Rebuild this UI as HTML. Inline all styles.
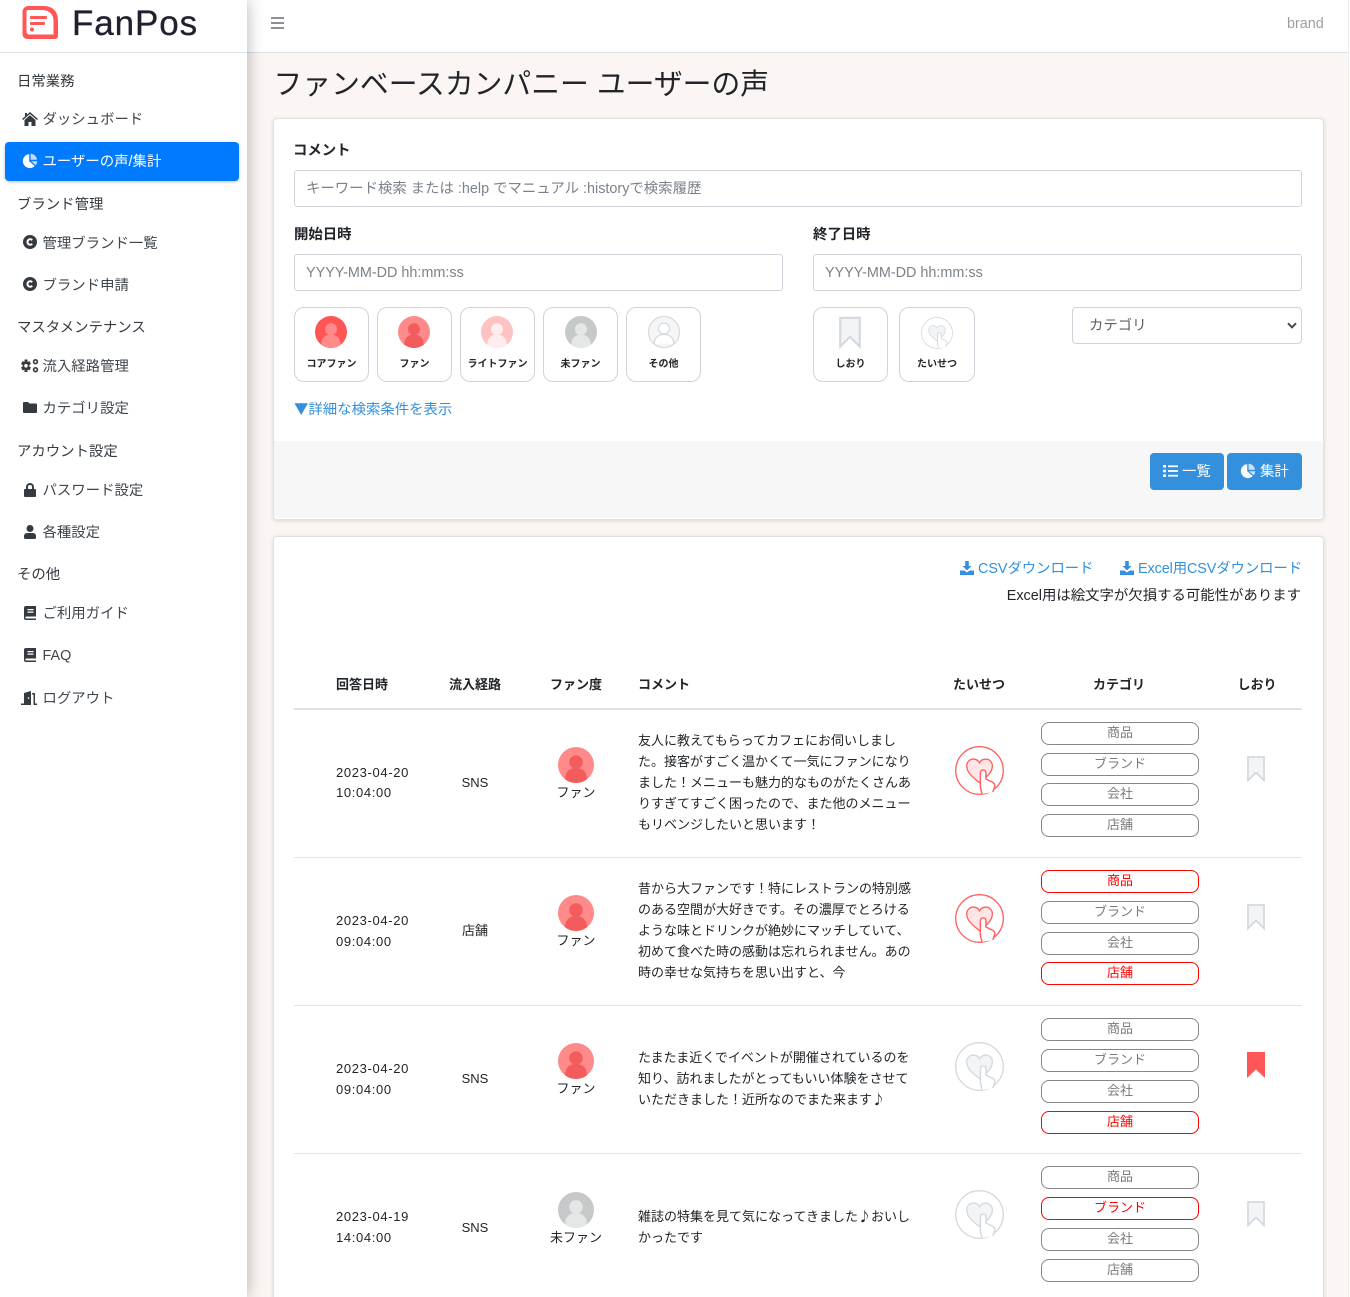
<!DOCTYPE html>
<html lang="ja"><head><meta charset="utf-8"><title>FanPos</title>
<style>
*{box-sizing:border-box}
html,body{margin:0;padding:0;background:#fff}
#p{position:relative;width:1350px;height:1297px;overflow:hidden;background:#fbf6f3;font-family:"Liberation Sans","Noto Sans CJK JP",sans-serif;color:#212529;font-size:13px}
.a,.t,.c{position:absolute}
.t{line-height:20px;height:20px;white-space:nowrap;margin-top:1px}
.c{line-height:20px;height:20px;white-space:nowrap;text-align:center;margin-top:1px}
svg{position:absolute;display:block;overflow:visible}
.s{font-size:14.4px;color:#343a40;left:17px;width:220px}
.n{font-size:14.4px;color:#3f464d;left:42.5px;width:190px}
.ic{color:#343a40;fill:currentColor}
.b{font-weight:700}
.d{letter-spacing:.65px}
.j{font-family:"Noto Sans CJK JP",sans-serif;margin-top:0}
.card{background:#fff;border:1px solid #e3e1e0;border-radius:4px;box-shadow:0 1px 4px rgba(0,0,0,.14)}
.inp{background:#fff;border:1px solid #ced4da;border-radius:3px;font-size:14.4px;color:#7b8289;line-height:37px;padding-left:11px;white-space:nowrap}
.tile{background:#fff;border:1px solid #ced4da;border-radius:10px;top:307px;height:75px}
.lb{font-size:10px;font-weight:700;top:354px;color:#212529}
.btn{background:#3490dc;border-radius:4px;top:453px;height:37px}
.l{color:#3490dc}
.cat{left:1041px;width:158px;height:23px;border:1px solid #868686;border-radius:8px;text-align:center;font-size:13px;line-height:19px;color:#7b7b7b;background:#fff}
.on{border-color:#f00;color:#f00}
.cm{left:638px;width:290px}
.rl{left:294px;width:1008px;height:1px;background:#e2e4e6}
</style></head><body><div id="p">
<svg width="0" height="0" style="position:absolute">
<defs>
<symbol id="av" viewBox="0 0 32 32"><circle cx="16" cy="16" r="16" style="fill:var(--x)"/><circle cx="16" cy="13.3" r="6" style="fill:var(--y)"/><path d="M6.4 28.8V27.5C6.4 22 10.7 18.5 16 18.5s9.600 3.500 9.600 9v1.300A16 16 0 0 1 6.400 28.800z" style="fill:var(--y)"/></symbol>
<symbol id="av0" viewBox="0 0 32 32"><circle cx="16" cy="16" r="15.500" fill="#f5f6f7" stroke="#ced4da"/><circle cx="16" cy="12.500" r="5.500" fill="#fff" stroke="#ced4da"/><path d="M6.500 28V26.500C6.500 21.500 10.700 18.500 16 18.500s9.500 3 9.500 8V28" fill="#fff" stroke="#ced4da"/></symbol>
<symbol id="hh" viewBox="0 0 48 48"><circle cx="24" cy="24" r="23.300" fill="#fff" style="stroke:var(--x)" stroke-width="1.300"/><path d="M24 36C18 31 11.500 26.500 11.500 19.500C11.500 15.500 14.500 12.800 18 12.800C20.500 12.800 22.800 14.200 24 16.500C25.200 14.200 27.500 12.800 30 12.800C33.500 12.800 36.600 15.500 36.600 19.500C36.600 26.500 30 31 24 36Z" style="fill:var(--y);stroke:var(--x)" stroke-width="1.300"/><path d="M26.500 47C26 44 24.600 41.500 24.900 39V26C24.900 22.600 30.300 22.600 30.300 26V32.300L37.300 35.800C38.800 36.800 39.300 38 39 39.500L37 45" fill="#fff" style="stroke:var(--x)" stroke-width="1.400"/></symbol>
<symbol id="bm" viewBox="0 0 18 26"><path d="M1 1H17V24.500L9 16.500L1 24.500Z" fill="#f3f4f5" stroke="#d3d9df" stroke-width="1.700"/></symbol>
<symbol id="pie" viewBox="0 0 16 16"><path d="M7.200 1.100A7 7 0 1 0 12.800 13L7.200 8.200Z" fill="currentColor"/><path d="M8.600 .8V6.800H15A6.700 6.700 0 0 0 8.600 .8Z" fill="currentColor" opacity=".75"/><path d="M9 8.300H15.300A7 7 0 0 1 13.800 12.300Z" fill="currentColor" opacity=".75"/></symbol>
<symbol id="cc" viewBox="0 0 14 14"><path fill-rule="evenodd" d="M7 0a7 7 0 1 1 0 14A7 7 0 0 1 7 0zM7.200 3.300a3.700 3.700 0 1 0 2.700 6.200L8.500 8.100a1.700 1.700 0 1 1 0-2.200L9.900 4.500a3.700 3.700 0 0 0-2.700-1.200z" fill="currentColor"/></symbol>
<symbol id="book" viewBox="0 0 12 14"><path fill-rule="evenodd" d="M2 0H12V10.500H2.300a1 1 0 0 0 0 2H12V14H2a2 2 0 0 1-2-2V2A2 2 0 0 1 2 0zM3.500 3V4.200H9.500V3zM3.500 5.500V6.700H9.500V5.500z" fill="currentColor"/></symbol>
<symbol id="dl" viewBox="0 0 14 14"><path d="M5.200 0H8.800V5H11.500L7 9.500 2.500 5H5.200ZM0 9.500H4.300L7 11.500 9.700 9.500H14V14H0Z" fill="currentColor"/></symbol>
</defs></svg>

<!-- topbar -->
<div class="a" style="left:0;top:0;width:1350px;height:53px;background:#fff;border-bottom:1px solid #dfe2e8"></div>
<div class="a" style="left:271px;top:17px;width:13px;height:2px;background:#8d9094"></div>
<div class="a" style="left:271px;top:22px;width:13px;height:2px;background:#8d9094"></div>
<div class="a" style="left:271px;top:27px;width:13px;height:2px;background:#8d9094"></div>
<div class="t" style="left:1287px;top:13px;font-size:14.400px;color:#9a9fa4">brand</div>
<div class="a" style="left:1348px;top:0;width:2px;height:1297px;background:#fff;border-left:1px solid #eeeceb"></div>

<!-- sidebar -->
<div class="a" style="left:0;top:0;width:247px;height:1297px;background:#fff;box-shadow:0 0 16px rgba(0,0,0,.3)"></div>
<div class="a" style="left:0;top:52px;width:247px;height:1px;background:#dfe2e8"></div>
<svg style="left:22px;top:6px" width="37" height="34" viewBox="0 0 37 34"><path fill-rule="evenodd" d="M6 0H22C31 0 36 6 36 14V30A3 3 0 0 1 33 33H5A5 5 0 0 1 .5 29V6A6 6 0 0 1 6 0Z" fill="#ff5757"/><path d="M5.500 4H20C27 4 31.500 8.500 31.500 14.500V28.500H7A2.500 2.500 0 0 1 4.500 26V5Z" fill="#fff"/><rect x="8" y="10" width="17" height="3" rx="1" fill="#ff5757"/><rect x="8" y="16" width="15" height="3" rx="1" fill="#ff5757"/><circle cx="10" cy="23.500" r="2" fill="#ff5757"/></svg>
<div class="t" style="left:72px;top:3px;height:40px;line-height:40px;font-size:35px;letter-spacing:.9px;color:#20202f;-webkit-text-stroke:.3px #20202f">FanPos</div>

<div class="t s" style="top:71px">日常業務</div>
<svg class="ic" style="left:22px;top:112px" width="16" height="14" viewBox="0 0 16 14"><path d="M8 0L16 7 15 8 8 2 1 8 0 7 3 4.500V1H5V2.800Z"/><path d="M8 3.300L13.500 8V14H9.500V10H6.500V14H2.500V8Z"/></svg>
<div class="t n" style="top:109px">ダッシュボード</div>
<div class="a" style="left:5px;top:142px;width:234px;height:39px;background:#007bff;border-radius:4px;box-shadow:0 1px 3px rgba(0,0,0,.25)"></div>
<svg style="left:22px;top:153px;color:#fff" width="16" height="16"><use href="#pie"/></svg>
<div class="t n" style="top:151px;color:#fff">ユーザーの声/集計</div>
<div class="t s" style="top:194px">ブランド管理</div>
<svg style="left:23px;top:235px;color:#343a40" width="14" height="14"><use href="#cc"/></svg>
<div class="t n" style="top:233px">管理ブランド一覧</div>
<svg style="left:23px;top:277px;color:#343a40" width="14" height="14"><use href="#cc"/></svg>
<div class="t n" style="top:275px">ブランド申請</div>
<div class="t s" style="top:317px">マスタメンテナンス</div>
<svg class="ic" style="left:21px;top:359px" width="18" height="14" viewBox="0 0 18 14"><path fill-rule="evenodd" d="M5 .5H8V3L9.800 2 11.500 5 9.800 6V7.500L11.500 8.500 9.800 11.500 8 10.500V13H5V10.500L3.200 11.500 1.500 8.500 3.200 7.500V6L1.500 5 3.200 2 5 3ZM6.500 5a1.800 1.800 0 1 0 0 3.600 1.800 1.800 0 0 0 0-3.600z" transform="translate(-1.500 0)"/><path fill-rule="evenodd" d="M14.500 0a2.700 2.700 0 1 1 0 5.400 2.700 2.700 0 0 1 0-5.400zM14.500 1.600a1.100 1.100 0 1 0 0 2.200 1.100 1.100 0 0 0 0-2.200zM14.500 8a2.700 2.700 0 1 1 0 5.400 2.700 2.700 0 0 1 0-5.400zM14.500 9.600a1.100 1.100 0 1 0 0 2.200 1.100 1.100 0 0 0 0-2.200z"/></svg>
<div class="t n" style="top:356px">流入経路管理</div>
<svg class="ic" style="left:23px;top:402px" width="14" height="11" viewBox="0 0 14 11"><path d="M1 0H5L6.500 1.500H13A1 1 0 0 1 14 2.500V10A1 1 0 0 1 13 11H1A1 1 0 0 1 0 10V1A1 1 0 0 1 1 0Z"/></svg>
<div class="t n" style="top:398px">カテゴリ設定</div>
<div class="t s" style="top:441px">アカウント設定</div>
<svg class="ic" style="left:24px;top:483px" width="12" height="14" viewBox="0 0 12 14"><path fill-rule="evenodd" d="M6 0A4 4 0 0 1 10 4V6H11A1 1 0 0 1 12 7V13A1 1 0 0 1 11 14H1A1 1 0 0 1 0 13V7A1 1 0 0 1 1 6H2V4A4 4 0 0 1 6 0ZM6 2A2 2 0 0 0 4 4V6H8V4A2 2 0 0 0 6 2Z"/></svg>
<div class="t n" style="top:480px">パスワード設定</div>
<svg class="ic" style="left:24px;top:525px" width="12" height="14" viewBox="0 0 12 14"><circle cx="6" cy="3.500" r="3.500"/><path d="M3 8H9A3 3 0 0 1 12 11V12.800A1.200 1.200 0 0 1 10.800 14H1.200A1.200 1.200 0 0 1 0 12.800V11A3 3 0 0 1 3 8Z"/></svg>
<div class="t n" style="top:522px">各種設定</div>
<div class="t s" style="top:564px">その他</div>
<svg style="left:24px;top:606px;color:#343a40" width="12" height="14"><use href="#book"/></svg>
<div class="t n" style="top:603px">ご利用ガイド</div>
<svg style="left:24px;top:648px;color:#343a40" width="12" height="14"><use href="#book"/></svg>
<div class="t n" style="top:645px">FAQ</div>
<svg class="ic" style="left:21px;top:691px" width="18" height="14" viewBox="0 0 18 14"><path fill-rule="evenodd" d="M3 12.500V2L10 0V14H0V12.500ZM7.500 6.300a.8.800 0 1 0 0 1.600.800.800 0 0 0 0-1.600z"/><path d="M11 2H14V12.500H16V14H12.500V3.500H11Z"/></svg>
<div class="t n" style="top:688px">ログアウト</div>

<!-- title -->
<div class="t" style="left:273.500px;top:63px;height:42px;line-height:42px;font-size:28.800px;color:#212529">ファンベースカンパニー ユーザーの声</div>

<!-- search card -->
<div class="a card" style="left:273px;top:118px;width:1051px;height:402px"></div>
<div class="t b" style="left:293px;top:140px;font-size:14.400px">コメント</div>
<div class="a inp" style="left:294px;top:170px;width:1008px;height:37px">キーワード検索 または :help でマニュアル :historyで検索履歴</div>
<div class="t b" style="left:294px;top:224px;font-size:14.400px">開始日時</div>
<div class="t b" style="left:813px;top:224px;font-size:14.400px">終了日時</div>
<div class="a inp" style="left:294px;top:254px;width:489px;height:37px">YYYY-MM-DD hh:mm:ss</div>
<div class="a inp" style="left:813px;top:254px;width:489px;height:37px">YYYY-MM-DD hh:mm:ss</div>

<div class="a tile" style="left:294px;width:75px"></div>
<div class="a tile" style="left:377px;width:75px"></div>
<div class="a tile" style="left:460px;width:75px"></div>
<div class="a tile" style="left:543px;width:75px"></div>
<div class="a tile" style="left:626px;width:75px"></div>
<svg style="left:315px;top:316px;--x:#ff5555;--y:#ff8a8a" width="32" height="32"><use href="#av"/></svg>
<svg style="left:398px;top:316px;--x:#ff8a8a;--y:#f25c5c" width="32" height="32"><use href="#av"/></svg>
<svg style="left:481px;top:316px;--x:#ffc2c2;--y:#ffecec" width="32" height="32"><use href="#av"/></svg>
<svg style="left:565px;top:316px;--x:#c6c9ca;--y:#e5e6e6" width="32" height="32"><use href="#av"/></svg>
<svg style="left:648px;top:316px" width="32" height="32"><use href="#av0"/></svg>
<div class="c lb" style="left:294px;width:75px">コアファン</div>
<div class="c lb" style="left:377px;width:75px">ファン</div>
<div class="c lb" style="left:460px;width:75px">ライトファン</div>
<div class="c lb" style="left:543px;width:75px">未ファン</div>
<div class="c lb" style="left:626px;width:75px">その他</div>

<div class="a tile" style="left:813px;width:75px"></div>
<div class="a tile" style="left:899px;width:76px"></div>
<svg style="left:839px;top:316px" width="22" height="33"><use href="#bm"/></svg>
<svg style="left:921px;top:317px;--x:#d6dbe0;--y:#f3f4f5" width="32" height="32"><use href="#hh"/></svg>
<div class="c lb" style="left:813px;width:75px">しおり</div>
<div class="c lb" style="left:899px;width:76px">たいせつ</div>

<div class="a inp" style="left:1072px;top:307px;width:230px;height:37px;padding-left:16px;color:#5a6268;font-size:14.400px;border-radius:4px">カテゴリ</div>
<svg style="left:1287px;top:322px" width="10" height="7" viewBox="0 0 10 7"><path d="M1 1.300L5 5.300 9 1.300" fill="none" stroke="#444a50" stroke-width="2"/></svg>

<div class="t l j" style="left:294px;top:399px;font-size:14.400px">▼詳細な検索条件を表示</div>

<div class="a" style="left:274px;top:441px;width:1049px;height:77px;background:#f7f7f7;border-radius:0 0 4px 4px"></div>
<div class="a btn" style="left:1150px;width:74px"></div>
<div class="a btn" style="left:1227px;width:75px"></div>
<svg style="left:1163px;top:465px" width="15" height="12" viewBox="0 0 15 12" fill="#fff"><rect width="3" height="2.600"/><rect y="4.700" width="3" height="2.600"/><rect y="9.400" width="3" height="2.600"/><rect x="5" y=".4" width="10" height="1.800"/><rect x="5" y="5.100" width="10" height="1.800"/><rect x="5" y="9.800" width="10" height="1.800"/></svg>
<div class="t" style="left:1182px;top:461px;font-size:14.400px;color:#fff">一覧</div>
<svg style="left:1240px;top:463px;color:#fff" width="16" height="16"><use href="#pie"/></svg>
<div class="t" style="left:1260px;top:461px;font-size:14.400px;color:#fff">集計</div>

<!-- list card -->
<div class="a card" style="left:273px;top:536px;width:1051px;height:790px"></div>
<svg style="left:960px;top:561px;color:#3490dc" width="14" height="14"><use href="#dl"/></svg>
<div class="t l" style="left:978px;top:558px;font-size:14.400px;letter-spacing:-.05px">CSVダウンロード</div>
<svg style="left:1120px;top:561px;color:#3490dc" width="14" height="14"><use href="#dl"/></svg>
<div class="t l" style="left:1138px;top:558px;font-size:14.400px;letter-spacing:-.1px">Excel用CSVダウンロード</div>
<div class="t" style="right:49px;top:585px;font-size:14.400px">Excel用は絵文字が欠損する可能性があります</div>

<div class="t b" style="left:336px;top:674px">回答日時</div>
<div class="c b" style="left:425px;width:100px;top:674px">流入経路</div>
<div class="c b" style="left:526px;width:100px;top:674px">ファン度</div>
<div class="t b" style="left:638px;top:674px">コメント</div>
<div class="c b" style="left:929px;width:100px;top:674px">たいせつ</div>
<div class="c b" style="left:1069px;width:100px;top:674px">カテゴリ</div>
<div class="c b" style="left:1207px;width:100px;top:674px">しおり</div>
<div class="a rl" style="top:708px;height:2px;background:#dee2e6"></div>

<!-- row 1 -->
<div class="t d" style="left:336px;top:762px">2023-04-20</div>
<div class="t d" style="left:336px;top:782px">10:04:00</div>
<div class="c" style="left:425px;width:100px;top:772px">SNS</div>
<svg style="left:558px;top:747px;--x:#ff8a8a;--y:#f25c5c" width="36" height="36"><use href="#av"/></svg>
<div class="c" style="left:526px;width:100px;top:782px">ファン</div>
<div class="t cm" style="top:730px">友人に教えてもらってカフェにお伺いしまし</div>
<div class="t cm" style="top:751px">た。接客がすごく温かくて一気にファンになり</div>
<div class="t cm" style="top:772px">ました！メニューも魅力的なものがたくさんあ</div>
<div class="t cm" style="top:793px">りすぎてすごく困ったので、また他のメニュー</div>
<div class="t cm" style="top:814px">もリベンジしたいと思います！</div>
<svg style="left:955px;top:746px;--x:#ff5f5f;--y:#ffe5e5" width="49" height="49"><use href="#hh"/></svg>
<div class="a cat" style="top:722px">商品</div>
<div class="a cat" style="top:753px">ブランド</div>
<div class="a cat" style="top:783px">会社</div>
<div class="a cat" style="top:814px">店舗</div>
<svg style="left:1247px;top:756px" width="18" height="26"><use href="#bm"/></svg>
<div class="a rl" style="top:857px"></div>

<!-- row 2 -->
<div class="t d" style="left:336px;top:910px">2023-04-20</div>
<div class="t d" style="left:336px;top:931px">09:04:00</div>
<div class="c" style="left:425px;width:100px;top:920px">店舗</div>
<svg style="left:558px;top:895px;--x:#ff8a8a;--y:#f25c5c" width="36" height="36"><use href="#av"/></svg>
<div class="c" style="left:526px;width:100px;top:930px">ファン</div>
<div class="t cm" style="top:878px">昔から大ファンです！特にレストランの特別感</div>
<div class="t cm" style="top:899px">のある空間が大好きです。その濃厚でとろける</div>
<div class="t cm" style="top:920px">ような味とドリンクが絶妙にマッチしていて、</div>
<div class="t cm" style="top:941px">初めて食べた時の感動は忘れられません。あの</div>
<div class="t cm" style="top:962px">時の幸せな気持ちを思い出すと、今</div>
<svg style="left:955px;top:894px;--x:#ff5f5f;--y:#ffe5e5" width="49" height="49"><use href="#hh"/></svg>
<div class="a cat on" style="top:870px">商品</div>
<div class="a cat" style="top:901px">ブランド</div>
<div class="a cat" style="top:932px">会社</div>
<div class="a cat on" style="top:962px">店舗</div>
<svg style="left:1247px;top:904px" width="18" height="26"><use href="#bm"/></svg>
<div class="a rl" style="top:1005px"></div>

<!-- row 3 -->
<div class="t d" style="left:336px;top:1058px">2023-04-20</div>
<div class="t d" style="left:336px;top:1079px">09:04:00</div>
<div class="c" style="left:425px;width:100px;top:1068px">SNS</div>
<svg style="left:558px;top:1043px;--x:#ff8a8a;--y:#f25c5c" width="36" height="36"><use href="#av"/></svg>
<div class="c" style="left:526px;width:100px;top:1078px">ファン</div>
<div class="t cm" style="top:1047px">たまたま近くでイベントが開催されているのを</div>
<div class="t cm" style="top:1068px">知り、訪れましたがとってもいい体験をさせて</div>
<div class="t cm j" style="top:1089px">いただきました！近所なのでまた来ます♪</div>
<svg style="left:955px;top:1042px;--x:#d3d9df;--y:#f3f4f5" width="49" height="49"><use href="#hh"/></svg>
<div class="a cat" style="top:1018px">商品</div>
<div class="a cat" style="top:1049px">ブランド</div>
<div class="a cat" style="top:1080px">会社</div>
<div class="a cat on" style="top:1111px">店舗</div>
<svg style="left:1247px;top:1052px" width="18" height="26" viewBox="0 0 18 26"><path d="M0 0H18V26L9 17.500 0 26Z" fill="#ff5757"/></svg>
<div class="a rl" style="top:1153px"></div>

<!-- row 4 -->
<div class="t d" style="left:336px;top:1206px">2023-04-19</div>
<div class="t d" style="left:336px;top:1227px">14:04:00</div>
<div class="c" style="left:425px;width:100px;top:1217px">SNS</div>
<svg style="left:558px;top:1192px;--x:#c6c9ca;--y:#e5e6e6" width="36" height="36"><use href="#av"/></svg>
<div class="c" style="left:526px;width:100px;top:1227px">未ファン</div>
<div class="t cm j" style="top:1206px">雑誌の特集を見て気になってきました♪おいし</div>
<div class="t cm" style="top:1227px">かったです</div>
<svg style="left:955px;top:1190px;--x:#d3d9df;--y:#f3f4f5" width="49" height="49"><use href="#hh"/></svg>
<div class="a cat" style="top:1166px">商品</div>
<div class="a cat on" style="top:1197px">ブランド</div>
<div class="a cat" style="top:1228px">会社</div>
<div class="a cat" style="top:1259px">店舗</div>
<svg style="left:1247px;top:1201px" width="18" height="26"><use href="#bm"/></svg>
</div></body></html>
